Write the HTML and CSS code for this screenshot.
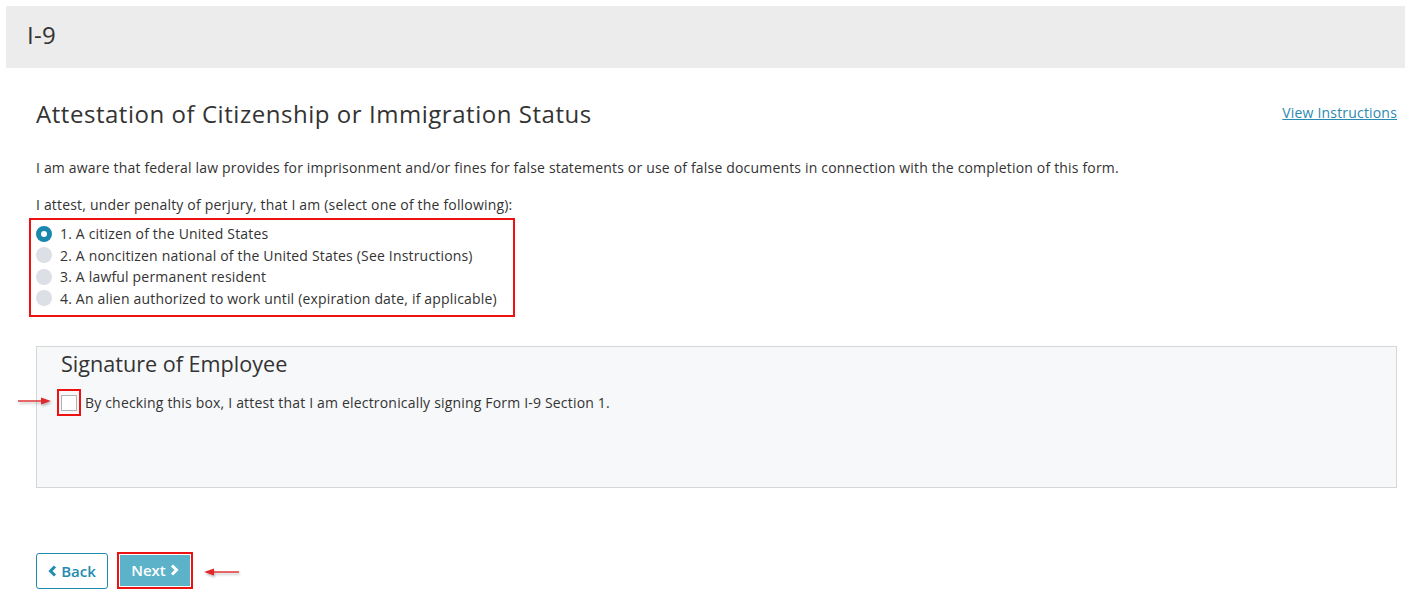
FILE: index.html
```html
<!DOCTYPE html>
<html lang="en">

<head>
    <meta charset="UTF-8">
    <title>I-9</title>
    <link rel="stylesheet" href="styles.css">
</head>

<body>
    <div class="topbar">I-9</div>

    <div class="main">
        <div class="title-row">
            <h2 class="page-title">Attestation of Citizenship or Immigration Status</h2>
            <a href="#" class="link">View Instructions</a>
        </div>

        <p class="warn">I am aware that federal law provides for imprisonment and/or fines for false statements or use of false documents in connection with the completion of this form.</p>
        <p class="attest">I attest, under penalty of perjury, that I am (select one of the following):</p>

        <div class="options marked">
            <label class="opt"><span class="radio checked"></span>1. A citizen of the United States</label>
            <label class="opt"><span class="radio"></span>2. A noncitizen national of the United States (See Instructions)</label>
            <label class="opt"><span class="radio"></span>3. A lawful permanent resident</label>
            <label class="opt"><span class="radio"></span>4. An alien authorized to work until (expiration date, if applicable)</label>
        </div>

        <div class="panel">
            <h3 class="panel-title">Signature of Employee</h3>
            <div class="sign-row">
                <svg class="arrow arrow-sign" width="36" height="10" viewBox="0 0 36 10">
                    <line x1="1" y1="5" x2="26" y2="5" stroke="#e0282a" stroke-width="1.4"/>
                    <polygon points="24,1.5 34,5 24,8.5" fill="#e0282a"/>
                </svg>
                <span class="box-mark"><span class="checkbox"></span></span>
                <span>By checking this box, I attest that I am electronically signing Form I-9 Section 1.</span>
            </div>
        </div>

        <div class="buttons">
            <button class="btn btn-back">
                <svg width="9" height="12" viewBox="0 0 9 12"><polyline points="7,1.5 2.5,6 7,10.5" fill="none" stroke="#1f8cb0" stroke-width="3"/></svg>
                Back
            </button>
            <span class="next-mark">
                <button class="btn btn-next">
                    Next
                    <svg width="9" height="12" viewBox="0 0 9 12"><polyline points="2,1.5 6.5,6 2,10.5" fill="none" stroke="#fff" stroke-width="3"/></svg>
                </button>
                <svg class="arrow arrow-next" width="38" height="10" viewBox="0 0 38 10">
                    <polygon points="1,5 11,1.5 11,8.5" fill="#e0282a"/>
                    <line x1="10" y1="5" x2="36" y2="5" stroke="#e0282a" stroke-width="1.4"/>
                </svg>
            </span>
        </div>
    </div>
</body>
</html>
```

FILE: styles.css
```css
/* base */
body, html {
margin: 0;
padding: 0;
background: #fff;
}

body {
font-family: "Open Sans", "Liberation Sans", sans-serif;
font-size: 14px;
letter-spacing: 0.18px;
color: #333;
}

/* barra superior */
.topbar {
margin: 6px 0 0 6px;
height: 62px;
background: #ececec;
padding-left: 21px;
font-size: 24px;
line-height: 58px;
letter-spacing: 0.3px;
color: #333;
}

.main {
padding: 0 8px 0 36px;
}

.title-row {
display: flex;
justify-content: space-between;
align-items: center;
margin-top: 32px;
}

.page-title {
margin: 0;
font-size: 24px;
font-weight: 400;
line-height: 28px;
letter-spacing: 0.54px;
}

.link {
color: #2a8ab0;
text-decoration: underline;
font-size: 14px;
margin-top: -4px;
}

.warn {
margin: 30px 0 0;
line-height: 20px;
}

.attest {
margin: 17px 0 0;
line-height: 20px;
}

/* opciones */
.options {
display: inline-flex;
flex-direction: column;
margin: 3px 0 0 -7px;
padding: 3px 16px 6px 5px;
}

.marked {
border: 2px solid #ee1111;
}

.opt {
display: flex;
align-items: center;
height: 21.5px;
gap: 8px;
}

.radio {
width: 16px;
height: 16px;
border-radius: 50%;
background: #dcdfe5;
box-sizing: border-box;
}

.radio.checked {
background: #fff;
border: 5px solid #1a87ad;
}

/* panel de firma */
.panel {
margin-top: 29px;
height: 140px;
border: 1px solid #d6d6d6;
background: #f7f8fa;
padding: 0 24px;
}

.panel-title {
margin: 4px 0 0;
font-size: 21.6px;
font-weight: 400;
line-height: 26px;
letter-spacing: 0;
}

.sign-row {
position: relative;
display: flex;
align-items: center;
gap: 4px;
margin-top: 12px;
margin-left: -4px;
}

.box-mark {
display: inline-flex;
padding: 4px 2px 3px;
border: 2px solid #ee1111;
}

.checkbox {
width: 14px;
height: 14px;
border: 1px solid #b3b3b3;
background: #fff;
}

.arrow {
position: absolute;
filter: drop-shadow(1px 2px 1px rgba(0, 0, 0, 0.25));
}

.arrow-sign {
left: -40px;
top: 7px;
}

/* botones */
.buttons {
display: flex;
align-items: center;
gap: 9px;
margin-top: 65px;
}

.btn {
font-family: "Open Sans", "Liberation Sans", sans-serif;
font-size: 15px;
font-weight: 600;
border-radius: 3px;
cursor: pointer;
display: inline-flex;
align-items: center;
gap: 4px;
}

.btn-back {
width: 72px;
height: 36px;
justify-content: center;
background: #fff;
color: #1f8cb0;
border: 1px solid #1f8cb0;
}

.next-mark {
position: relative;
display: inline-flex;
border: 2px solid #ee1111;
padding: 1px;
margin-top: -2px;
}

.btn-next {
width: 70px;
height: 31px;
justify-content: center;
background: #5bb2c9;
color: #fff;
border: none;
border-radius: 0;
}

.arrow-next {
left: 84px;
top: 13px;
}
```
